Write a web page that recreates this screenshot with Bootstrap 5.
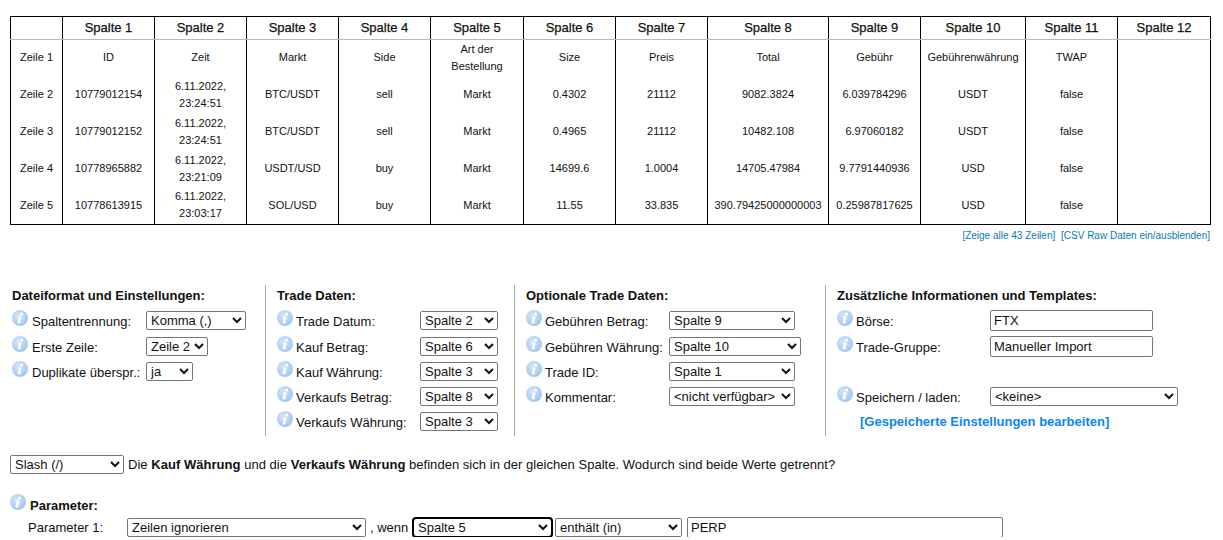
<!DOCTYPE html>
<html lang="de"><head><meta charset="utf-8"><title>Import</title>
<link href="https://cdn.jsdelivr.net/npm/bootstrap@5.3.0/dist/css/bootstrap.min.css" rel="stylesheet">
<style>
body{font-family:"Liberation Sans",Arial,sans-serif;font-size:13px;color:#111;background:#fff;margin:0}
.page-wrap{padding:16px 13px 0 10px;width:1223px}
.csv-grid{table-layout:fixed;border-collapse:collapse;width:1200px;border:1px solid #000;font-size:11px;line-height:17px;text-align:center}
.csv-grid th{font-weight:400;font-size:13px;height:22.6px;padding:0 0 1px;border-left:1px solid #000;border-bottom:1px solid #bbb;-webkit-text-stroke:.25px #111}
.csv-grid td{height:37px;padding:0;border-left:1px solid #000;white-space:nowrap}
.csv-grid td:first-child,.csv-grid th:first-child{border-left:0}
.csv-links{font-size:10px;text-align:right;line-height:12px;margin-top:5.4px;height:12px}
.csv-links a{color:#0b78b5;text-decoration:none;margin-left:3px}
.opt-area{margin-top:43.4px;height:151px}
.opt-col{flex:none;height:151px;padding-left:11px;border-left:1px solid #aaa}
.opt-col:first-child{border-left:0;padding-left:2px}
.w1{width:255px}.w2{width:249px}.w3{width:311px}.w4{width:375px}
.opt-title{font-weight:700;font-size:13px;height:19px;line-height:18px;margin-top:2px;margin-bottom:5px;white-space:nowrap}
.opt-row{height:25.25px;display:flex;align-items:flex-start}
.lab{display:flex;align-items:flex-start;white-space:nowrap;flex:none}
.lab span{padding-top:2px;line-height:17px;margin-left:4px}
.opt-col:not(:first-child) .lab span{margin-left:3px}
.l1{width:134px}.l2{width:143px}.l3{width:143px}.l4{width:153px}
.tip{flex:none;width:16px;height:16px;display:block;margin-top:-1px}
select.nat{font-family:"Liberation Sans",Arial,sans-serif;font-size:13px;height:19px;line-height:15px;padding:0;border:1px solid #767676;border-radius:2px;background:#fff;color:#111;margin:0}
select.focused{outline:2px solid #000;outline-offset:-1px;border-radius:3px}
input.nat{font-family:"Liberation Sans",Arial,sans-serif;font-size:13px;height:21px;padding:1px 3px;border:1px solid #767676;border-radius:2px;color:#111;margin:-1px 0 0}
.s100{width:100px}.s62{width:62px}.s47{width:47px}.s78{width:78px}.s125{width:126px}.s131{width:132px}.s187{width:188px}
.in163{width:163px}
.spacer-row{height:25.25px}
.save-link{font-weight:700;font-size:13px;color:#0d85ef;text-decoration:none;margin-left:23px;display:block;line-height:17px;margin-top:1px}
.sep-row{margin-top:19px;height:19px;line-height:19px;white-space:nowrap;letter-spacing:.034px}
select.sl114{width:114px;margin-right:4px;letter-spacing:0}
.param-head{margin-top:21px;height:22px;align-items:flex-start}
.param-head b{margin-left:4px;line-height:17px;padding-top:2px;display:block}
.param-row{height:20px;gap:0;white-space:nowrap;padding-left:18px}
.plab{width:99px;flex:none}
.s239{width:239px}.s140{width:139px}select.s127{width:127px;margin-left:3px}
.wenn{width:47px;flex:none;padding-left:4px}
input.in317{width:316px;margin:0 0 0 5px}
</style></head><body>
<svg width="0" height="0" class="position-absolute"><defs>
<radialGradient id="tg" cx="40%" cy="35%" r="70%"><stop offset="0" stop-color="#d6e7f9"/><stop offset="1" stop-color="#9cc4ee"/></radialGradient>
<symbol id="inf" viewBox="0 0 16 16"><circle cx="8" cy="8" r="8" fill="url(#tg)"/><circle cx="9.6" cy="3.9" r="1.5" fill="#fff"/><path d="M6.3 6.6h3.4l-1.5 5.6h1.1l-.4 1.1H5.4l1.4-5.6h-.8z" fill="#fff"/></symbol>
</defs></svg>
<div class="page-wrap">
<table class="csv-grid">
<colgroup><col style="width:52px"><col style="width:92px"><col style="width:92px"><col style="width:92px"><col style="width:92px"><col style="width:93px"><col style="width:92px"><col style="width:92px"><col style="width:121px"><col style="width:92px"><col style="width:105px"><col style="width:92px"><col style="width:93px"></colgroup>
<thead><tr><th></th><th>Spalte 1</th><th>Spalte 2</th><th>Spalte 3</th><th>Spalte 4</th><th>Spalte 5</th><th>Spalte 6</th><th>Spalte 7</th><th>Spalte 8</th><th>Spalte 9</th><th>Spalte 10</th><th>Spalte 11</th><th>Spalte 12</th></tr></thead>
<tbody>
<tr><td>Zeile 1</td><td>ID</td><td>Zeit</td><td>Markt</td><td>Side</td><td>Art der<br>Bestellung</td><td>Size</td><td>Preis</td><td>Total</td><td>Gebühr</td><td>Gebührenwährung</td><td>TWAP</td><td></td></tr>
<tr><td>Zeile 2</td><td>10779012154</td><td>6.11.2022,<br>23:24:51</td><td>BTC/USDT</td><td>sell</td><td>Markt</td><td>0.4302</td><td>21112</td><td>9082.3824</td><td>6.039784296</td><td>USDT</td><td>false</td><td></td></tr>
<tr><td>Zeile 3</td><td>10779012152</td><td>6.11.2022,<br>23:24:51</td><td>BTC/USDT</td><td>sell</td><td>Markt</td><td>0.4965</td><td>21112</td><td>10482.108</td><td>6.97060182</td><td>USDT</td><td>false</td><td></td></tr>
<tr><td>Zeile 4</td><td>10778965882</td><td>6.11.2022,<br>23:21:09</td><td>USDT/USD</td><td>buy</td><td>Markt</td><td>14699.6</td><td>1.0004</td><td>14705.47984</td><td>9.7791440936</td><td>USD</td><td>false</td><td></td></tr>
<tr><td>Zeile 5</td><td>10778613915</td><td>6.11.2022,<br>23:03:17</td><td>SOL/USD</td><td>buy</td><td>Markt</td><td>11.55</td><td>33.835</td><td>390.79425000000003</td><td>0.25987817625</td><td>USD</td><td>false</td><td></td></tr>
</tbody></table>
<div class="csv-links" style="width:1200px"><a href="#">[Zeige alle 43 Zeilen]</a> <a href="#">[CSV Raw Daten ein/ausblenden]</a></div>

<div class="d-flex opt-area">
 <div class="opt-col w1">
  <div class="opt-title">Dateiformat und Einstellungen:</div>
  <div class="opt-row"><div class="lab l1"><svg class="tip"><use href="#inf"/></svg><span>Spaltentrennung:</span></div><select class="nat s100"><option>Komma (,)</option></select></div>
  <div class="opt-row"><div class="lab l1"><svg class="tip"><use href="#inf"/></svg><span>Erste Zeile:</span></div><select class="nat s62"><option>Zeile 2</option></select></div>
  <div class="opt-row"><div class="lab l1"><svg class="tip"><use href="#inf"/></svg><span>Duplikate überspr.:</span></div><select class="nat s47"><option>ja</option></select></div>
 </div>
 <div class="opt-col w2">
  <div class="opt-title">Trade Daten:</div>
  <div class="opt-row"><div class="lab l2"><svg class="tip"><use href="#inf"/></svg><span>Trade Datum:</span></div><select class="nat s78"><option>Spalte 2</option></select></div>
  <div class="opt-row"><div class="lab l2"><svg class="tip"><use href="#inf"/></svg><span>Kauf Betrag:</span></div><select class="nat s78"><option>Spalte 6</option></select></div>
  <div class="opt-row"><div class="lab l2"><svg class="tip"><use href="#inf"/></svg><span>Kauf Währung:</span></div><select class="nat s78"><option>Spalte 3</option></select></div>
  <div class="opt-row"><div class="lab l2"><svg class="tip"><use href="#inf"/></svg><span>Verkaufs Betrag:</span></div><select class="nat s78"><option>Spalte 8</option></select></div>
  <div class="opt-row"><div class="lab l2"><svg class="tip"><use href="#inf"/></svg><span>Verkaufs Währung:</span></div><select class="nat s78"><option>Spalte 3</option></select></div>
 </div>
 <div class="opt-col w3">
  <div class="opt-title">Optionale Trade Daten:</div>
  <div class="opt-row"><div class="lab l3"><svg class="tip"><use href="#inf"/></svg><span>Gebühren Betrag:</span></div><select class="nat s125"><option>Spalte 9</option></select></div>
  <div class="opt-row"><div class="lab l3"><svg class="tip"><use href="#inf"/></svg><span>Gebühren Währung:</span></div><select class="nat s131"><option>Spalte 10</option></select></div>
  <div class="opt-row"><div class="lab l3"><svg class="tip"><use href="#inf"/></svg><span>Trade ID:</span></div><select class="nat s125"><option>Spalte 1</option></select></div>
  <div class="opt-row"><div class="lab l3"><svg class="tip"><use href="#inf"/></svg><span>Kommentar:</span></div><select class="nat s125"><option>&lt;nicht verfügbar&gt;</option></select></div>
 </div>
 <div class="opt-col w4">
  <div class="opt-title">Zusätzliche Informationen und Templates:</div>
  <div class="opt-row"><div class="lab l4"><svg class="tip"><use href="#inf"/></svg><span>Börse:</span></div><input class="nat in163" value="FTX"></div>
  <div class="opt-row"><div class="lab l4"><svg class="tip"><use href="#inf"/></svg><span>Trade-Gruppe:</span></div><input class="nat in163" value="Manueller Import"></div>
  <div class="spacer-row"></div>
  <div class="opt-row"><div class="lab l4"><svg class="tip"><use href="#inf"/></svg><span>Speichern / laden:</span></div><select class="nat s187"><option>&lt;keine&gt;</option></select></div>
  <a class="save-link" href="#">[Gespeicherte Einstellungen bearbeiten]</a>
 </div>
</div>

<div class="sep-row d-flex align-items-center"><select class="nat sl114"><option>Slash (/)</option></select><span>Die <b>Kauf Währung</b> und die <b>Verkaufs Währung</b> befinden sich in der gleichen Spalte. Wodurch sind beide Werte getrennt?</span></div>
<div class="param-head d-flex"><svg class="tip"><use href="#inf"/></svg><b>Parameter:</b></div>
<div class="param-row d-flex align-items-center"><span class="plab">Parameter 1:</span><select class="nat s239"><option>Zeilen ignorieren</option></select><span class="wenn">, wenn</span><select class="nat s140 focused"><option>Spalte 5</option></select><select class="nat s127"><option>enthält (in)</option></select><input class="nat in317" value="PERP"></div>
</div>
<script src="https://cdn.jsdelivr.net/npm/bootstrap@5.3.0/dist/js/bootstrap.bundle.min.js"></script>
</body></html>
